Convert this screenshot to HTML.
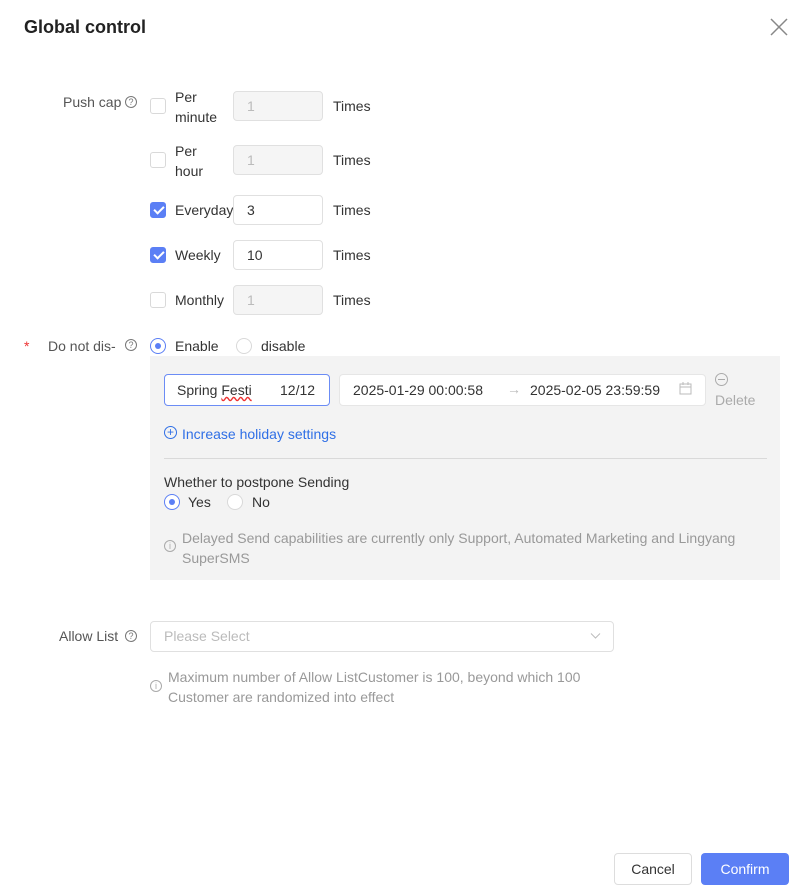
<!DOCTYPE html>
<html><head><meta charset="utf-8"><style>
*{box-sizing:border-box;margin:0;padding:0}
body{width:805px;height:890px;background:#fff;font-family:"Liberation Sans",sans-serif;font-size:14px;color:#333;position:relative;overflow:hidden}
.a{position:absolute;white-space:nowrap}
.lbl{color:#555}
.cb{position:absolute;width:16px;height:16px;border:1px solid #d9d9d9;border-radius:3px;background:#fff}
.cb.on{background:#5b7ff5;border-color:#5b7ff5}
.cb.on::after{content:"";position:absolute;left:5px;top:1px;width:4px;height:8px;border:solid #fff;border-width:0 2px 2px 0;transform:rotate(45deg)}
.inp{position:absolute;width:90px;height:30px;border:1px solid #e0e0e0;border-radius:4px;padding-left:13px;line-height:28px}
.inp.dis{background:#f5f5f5;color:#bbb}
.rd{position:absolute;width:16px;height:16px;border:1px solid #d9d9d9;border-radius:50%;background:#fff}
.rd.on{border-color:#5b7ff5}
.rd.on::after{content:"";position:absolute;left:4px;top:4px;width:6px;height:6px;border-radius:50%;background:#5b7ff5}
.q{position:absolute;width:12px;height:12px;border:1px solid #777;border-radius:50%;font-size:9px;line-height:10px;text-align:center;color:#777}
.info{position:absolute;width:12px;height:12px;border:1px solid #aaa;border-radius:50%;font-size:9px;line-height:10px;text-align:center;color:#aaa}
</style></head><body>
<div class="a" style="left:24px;top:17px;font-size:18px;font-weight:bold;color:#222">Global control</div>
<svg class="a" style="left:770px;top:18px" width="18" height="18" viewBox="0 0 18 18"><path d="M1 1L17 17M17 1L1 17" stroke="#888" stroke-width="1.5"/></svg>

<div class="a lbl" style="left:63px;top:94px">Push cap</div><div class="q" style="left:125px;top:96px">?</div>
<div class="cb" style="left:150px;top:98px"></div>
<div class="a" style="left:175px;top:87px;line-height:20px">Per<br>minute</div>
<div class="inp dis" style="left:233px;top:91px">1</div><div class="a" style="left:333px;top:98px">Times</div>

<div class="cb" style="left:150px;top:152px"></div>
<div class="a" style="left:175px;top:141px;line-height:20px">Per<br>hour</div>
<div class="inp dis" style="left:233px;top:145px">1</div><div class="a" style="left:333px;top:152px">Times</div>

<div class="cb on" style="left:150px;top:202px"></div>
<div class="a" style="left:175px;top:202px">Everyday</div>
<div class="inp" style="left:233px;top:195px">3</div><div class="a" style="left:333px;top:202px">Times</div>

<div class="cb on" style="left:150px;top:247px"></div>
<div class="a" style="left:175px;top:247px">Weekly</div>
<div class="inp" style="left:233px;top:240px">10</div><div class="a" style="left:333px;top:247px">Times</div>

<div class="cb" style="left:150px;top:292px"></div>
<div class="a" style="left:175px;top:292px">Monthly</div>
<div class="inp dis" style="left:233px;top:285px">1</div><div class="a" style="left:333px;top:292px">Times</div>

<div class="a" style="left:24px;top:338px;color:#e33">*</div>
<div class="a lbl" style="left:48px;top:338px">Do not dis-</div><div class="q" style="left:125px;top:339px">?</div>
<div class="rd on" style="left:150px;top:338px"></div><div class="a" style="left:175px;top:338px">Enable</div>
<div class="rd" style="left:236px;top:338px"></div><div class="a" style="left:261px;top:338px">disable</div>

<div class="a" style="left:150px;top:356px;width:630px;height:224px;background:#f3f3f3"></div>
<div class="a" style="left:164px;top:374px;width:166px;height:32px;border:1px solid #6b8cf5;border-radius:4px;background:#fff"></div>
<div class="a" style="left:177px;top:382px">Spring <span style="text-decoration:underline wavy #e33">Festi</span></div>
<div class="a" style="left:280px;top:382px">12/12</div>
<div class="a" style="left:339px;top:374px;width:367px;height:32px;border:1px solid #e6e6e6;border-radius:4px;background:#fff"></div>
<div class="a" style="left:353px;top:382px">2025-01-29 00:00:58</div>
<div class="a" style="left:507px;top:381px;color:#bbb">→</div>
<div class="a" style="left:530px;top:382px">2025-02-05 23:59:59</div>
<svg class="a" style="left:679px;top:382px" width="13" height="13" viewBox="0 0 13 13"><rect x="1" y="2" width="11" height="10" fill="none" stroke="#bbb"/><path d="M1 5H12M4 0V3M9 0V3" stroke="#bbb"/></svg>
<div class="a" style="left:715px;top:373px;width:13px;height:13px;border:1px solid #aaa;border-radius:50%"></div>
<div class="a" style="left:718px;top:379px;width:7px;height:1px;background:#aaa"></div>
<div class="a" style="left:715px;top:392px;color:#aaa">Delete</div>
<div class="a" style="left:164px;top:426px;width:13px;height:13px;border:1px solid #2f6fe6;border-radius:50%;color:#2f6fe6;font-size:12px;line-height:10px;text-align:center">+</div>
<div class="a" style="left:182px;top:426px;color:#2f6fe6">Increase holiday settings</div>
<div class="a" style="left:164px;top:458px;width:603px;height:1px;background:#d9d9d9"></div>
<div class="a" style="left:164px;top:474px">Whether to postpone Sending</div>
<div class="rd on" style="left:164px;top:494px"></div><div class="a" style="left:188px;top:494px">Yes</div>
<div class="rd" style="left:227px;top:494px"></div><div class="a" style="left:252px;top:494px">No</div>
<div class="info" style="left:164px;top:540px">i</div>
<div class="a" style="left:182px;top:528px;color:#999;line-height:20px;white-space:normal;width:595px">Delayed Send capabilities are currently only Support, Automated Marketing and Lingyang SuperSMS</div>

<div class="a lbl" style="left:59px;top:628px">Allow List</div><div class="q" style="left:125px;top:630px">?</div>
<div class="a" style="left:150px;top:621px;width:464px;height:31px;border:1px solid #e0e0e0;border-radius:4px"></div>
<div class="a" style="left:164px;top:628px;color:#bbb">Please Select</div>
<svg class="a" style="left:590px;top:632px" width="11" height="8" viewBox="0 0 11 8"><path d="M1 1.5L5.5 6L10 1.5" fill="none" stroke="#bbb"/></svg>
<div class="info" style="left:150px;top:680px">i</div>
<div class="a" style="left:168px;top:667px;color:#999;line-height:20px">Maximum number of Allow ListCustomer is 100, beyond which 100<br>Customer are randomized into effect</div>

<div class="a" style="left:614px;top:853px;width:78px;height:32px;border:1px solid #ddd;border-radius:4px;text-align:center;line-height:30px">Cancel</div>
<div class="a" style="left:701px;top:853px;width:88px;height:32px;background:#5b7ff5;border-radius:4px;text-align:center;line-height:32px;color:#fff">Confirm</div>
</body></html>
